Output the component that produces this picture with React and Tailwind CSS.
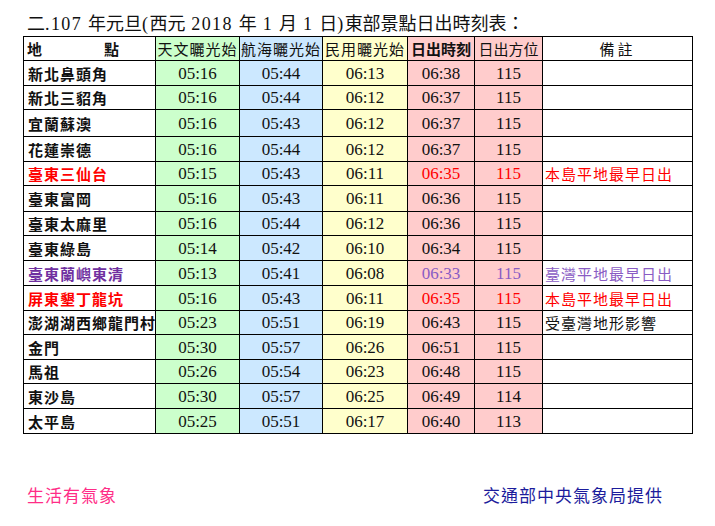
import React from "react";

const rows = [
  ["新北鼻頭角", "05:16", "05:44", "06:13", "06:38", "115", "", "", 25],
  ["新北三貂角", "05:16", "05:44", "06:12", "06:37", "115", "", "", 24],
  ["宜蘭蘇澳", "05:16", "05:43", "06:12", "06:37", "115", "", "", 27],
  ["花蓮崇德", "05:16", "05:44", "06:12", "06:37", "115", "", "", 25],
  ["臺東三仙台", "05:15", "05:43", "06:11", "06:35", "115", "本島平地最早日出", "red", 24],
  ["臺東富岡", "05:16", "05:43", "06:11", "06:36", "115", "", "", 26],
  ["臺東太麻里", "05:16", "05:44", "06:12", "06:36", "115", "", "", 24],
  ["臺東綠島", "05:14", "05:42", "06:10", "06:34", "115", "", "", 25],
  ["臺東蘭嶼東清", "05:13", "05:41", "06:08", "06:33", "115", "臺灣平地最早日出", "purple", 25],
  ["屏東墾丁龍坑", "05:16", "05:43", "06:11", "06:35", "115", "本島平地最早日出", "red", 25],
  ["澎湖湖西鄉龍門村", "05:23", "05:51", "06:19", "06:43", "115", "受臺灣地形影響", "", 24],
  ["金門", "05:30", "05:57", "06:26", "06:51", "115", "", "", 25],
  ["馬祖", "05:26", "05:54", "06:23", "06:48", "115", "", "", 24],
  ["東沙島", "05:30", "05:57", "06:25", "06:49", "114", "", "", 25],
  ["太平島", "05:25", "05:51", "06:17", "06:40", "113", "", "", 25],
];

const serif = { fontFamily: '"Liberation Serif", "Noto Sans CJK TC", serif' };
const cjk = { fontFamily: '"Noto Sans CJK TC", sans-serif' };

function colorClass(c, purpleLight) {
  if (c === "red") return "text-[#ff0000]";
  if (c === "purple") return purpleLight ? "text-[#8a5cc4]" : "text-[#7030a0]";
  return "text-[#111111]";
}

function L({ children }) {
  return <span className="tracking-[1.4px]">{children}</span>;
}

export default function App() {
  return (
    <div className="w-[715px] h-[526px] bg-white relative overflow-hidden" style={serif}>
      <div className="pl-[27px] pt-[12px] h-[36px] text-[18px] leading-[24px] text-[#111111] whitespace-pre">
        二<L>.107 </L>年元旦<L>(</L>西元<L> 2018 </L>年<L> 1 </L>月<L> 1 </L>日<L>)</L>東部景點日出時刻表：
      </div>
      <div className="pl-[23px]">
        <table className="border-collapse table-fixed w-[669px]">
          <colgroup>
            <col className="w-[132px]" />
            <col className="w-[84px]" />
            <col className="w-[83px]" />
            <col className="w-[85px]" />
            <col className="w-[67px]" />
            <col className="w-[68px]" />
            <col className="w-[150px]" />
          </colgroup>
          <thead>
            <tr className="h-[24px] text-[15px] leading-none text-[#111111]" style={cjk}>
              <th className="border border-black bg-white text-left font-bold pl-[3px] p-0">
                <span>地</span>
                <span className="ml-[62px]">點</span>
              </th>
              <th className="border border-black bg-[#ccffcc] font-normal p-0 tracking-[1px]">天文曬光始</th>
              <th className="border border-black bg-[#cce8ff] font-normal p-0 tracking-[1px]">航海曬光始</th>
              <th className="border border-black bg-[#ffffcc] font-normal p-0 tracking-[1px]">民用曬光始</th>
              <th className="border border-black bg-[#ffcccc] font-bold p-0 tracking-[0px]">日出時刻</th>
              <th className="border border-black bg-[#ffcccc] font-normal p-0 tracking-[0px]">日出方位</th>
              <th className="border border-black bg-white font-normal p-0 tracking-[3px]">備註</th>
            </tr>
          </thead>
          <tbody>
            {rows.map((r) => (
              <tr key={r[0]} style={{ height: r[8] }} className="text-[17px] leading-none">
                <td
                  className={`border border-black p-0 pl-[4px] text-[15px] font-bold tracking-[1px] whitespace-nowrap overflow-hidden ${colorClass(r[7])}`}
                  style={cjk}
                >
                  {r[0]}
                </td>
                <td className="border border-black p-0 text-center bg-[#ccffcc] text-[#111111]">{r[1]}</td>
                <td className="border border-black p-0 text-center bg-[#cce8ff] text-[#111111]">{r[2]}</td>
                <td className="border border-black p-0 text-center bg-[#ffffcc] text-[#111111]">{r[3]}</td>
                <td className={`border border-black p-0 text-center bg-[#ffcccc] ${colorClass(r[7], true)}`}>{r[4]}</td>
                <td className={`border border-black p-0 text-center bg-[#ffcccc] ${colorClass(r[7], true)}`}>{r[5]}</td>
                <td
                  className={`border border-black p-0 pl-[2px] text-[15px] tracking-[1px] whitespace-nowrap ${colorClass(r[7], true)}`}
                  style={cjk}
                >
                  {r[6]}
                </td>
              </tr>
            ))}
          </tbody>
        </table>
      </div>
      <div className="flex items-center mt-[49px] h-[24px] text-[17px] tracking-[1px]" style={cjk}>
        <div className="pl-[27px] text-[#ff2d87]">生活有氣象</div>
        <div className="ml-[366px] text-[#1c1c9c]">交通部中央氣象局提供</div>
      </div>
    </div>
  );
}
